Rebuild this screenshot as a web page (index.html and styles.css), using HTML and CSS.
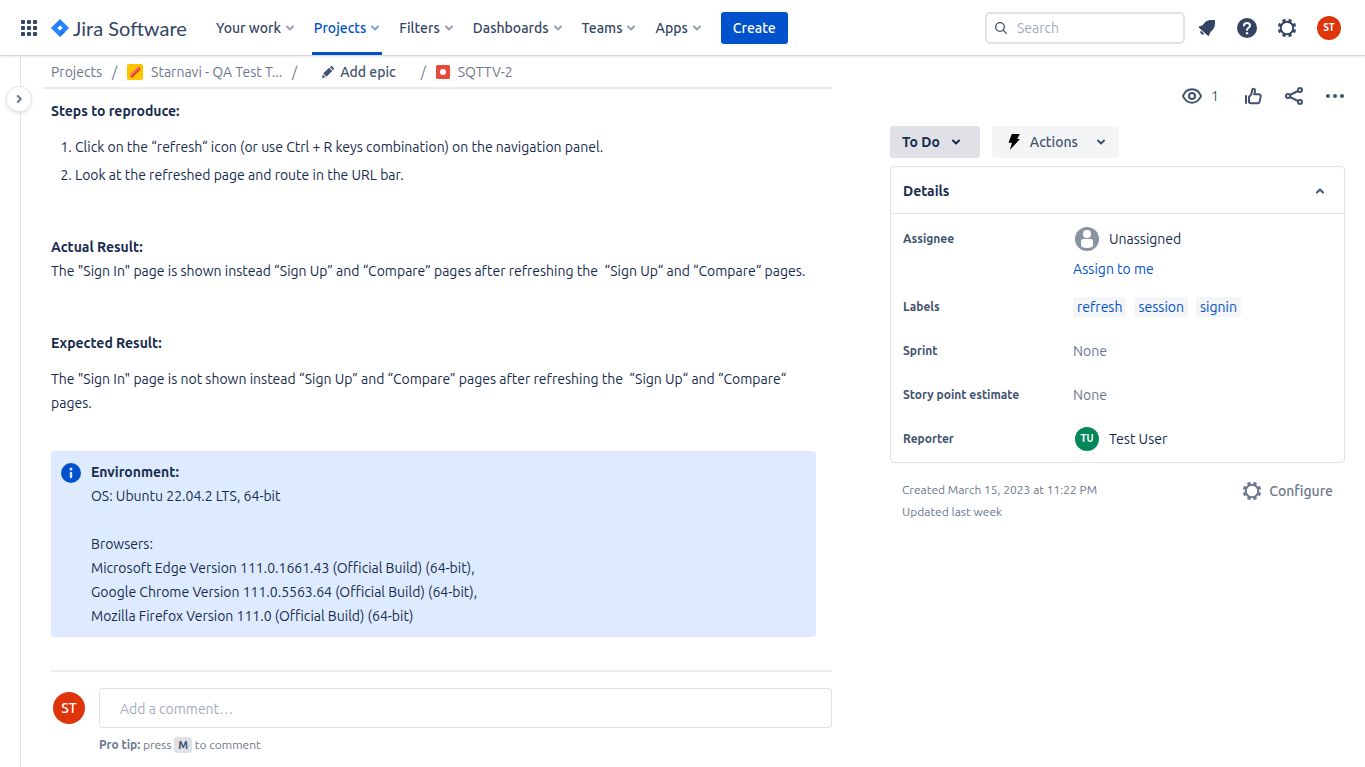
FILE: index.html
```html
<!DOCTYPE html>
<html lang="en">
<head>
<meta charset="utf-8">
<meta name="viewport" content="width=device-width, initial-scale=1">
<title>SQTTV-2 - Jira Software</title>
<link rel="stylesheet" href="styles.css">
</head>
<body>
<svg class="sprite" aria-hidden="true">
  <symbol id="chevron" viewBox="0 0 10 10"><path d="M2 3.5 5 6.5 8 3.5" fill="none" stroke="currentColor" stroke-width="2" stroke-linecap="round" stroke-linejoin="round"/></symbol>
  <symbol id="gear" viewBox="0 0 20 20">
    <g fill="none" stroke="currentColor">
      <circle cx="10" cy="10" r="6.300" stroke-width="2"/>
      <circle cx="10" cy="10" r="7.900" stroke-width="2.800" pathLength="80" stroke-dasharray="5 5" stroke-dashoffset="-2.500"/>
    </g>
  </symbol>
</svg>
<header class="topbar">
  <button class="plain switcher" aria-label="Switch to">
    <svg width="16" height="16" viewBox="0 0 16 16" fill="currentColor"><rect width="4" height="4" rx="1"/><rect x="6" width="4" height="4" rx="1"/><rect x="12" width="4" height="4" rx="1"/><rect y="6" width="4" height="4" rx="1"/><rect x="6" y="6" width="4" height="4" rx="1"/><rect x="12" y="6" width="4" height="4" rx="1"/><rect y="12" width="4" height="4" rx="1"/><rect x="6" y="12" width="4" height="4" rx="1"/><rect x="12" y="12" width="4" height="4" rx="1"/></svg>
  </button>
  <a class="brand" href="#">
    <svg width="18" height="18" viewBox="0 0 18 18">
      <defs>
        <linearGradient id="fold-a" x1="9" y1="3" x2="5" y2="7" gradientUnits="userSpaceOnUse"><stop offset="0" stop-color="#0f62dc"/><stop offset="1" stop-color="#2684ff"/></linearGradient>
        <linearGradient id="fold-b" x1="9" y1="15" x2="13" y2="11" gradientUnits="userSpaceOnUse"><stop offset="0" stop-color="#0f62dc"/><stop offset="1" stop-color="#2684ff"/></linearGradient>
      </defs>
      <path d="M9 0 17.600 8.500a.7.7 0 0 1 0 1L9 18 .4 9.500a.7.7 0 0 1 0-1ZM9 6.300 6.300 9 9 11.700 11.700 9Z" fill="#2684ff" fill-rule="evenodd"/>
      <path d="M9 6.300A4.400 4.400 0 0 1 9 2.500L5.200 6.300 7.200 8.100Z" fill="url(#fold-a)"/>
      <path d="M9 11.700A4.400 4.400 0 0 1 9 18L14.400 12.600 11.300 9.400Z" fill="url(#fold-b)"/>
    </svg>
    <span>Jira Software</span>
  </a>
  <nav class="menu" aria-label="Primary">
    <button>Your work<svg><use href="#chevron"/></svg></button>
    <button class="current">Projects<svg><use href="#chevron"/></svg></button>
    <button>Filters<svg><use href="#chevron"/></svg></button>
    <button>Dashboards<svg><use href="#chevron"/></svg></button>
    <button>Teams<svg><use href="#chevron"/></svg></button>
    <button>Apps<svg><use href="#chevron"/></svg></button>
  </nav>
  <button class="create">Create</button>
  <div class="tools">
    <label class="search">
      <svg width="12" height="12" viewBox="0 0 12 12" fill="none" stroke="#42526e" stroke-width="1.300"><circle cx="5" cy="5" r="4.300"/><path d="m8.200 8.200 3.200 3.200" stroke-linecap="round"/></svg>
      <input type="search" placeholder="Search" aria-label="Search">
    </label>
    <button class="plain" aria-label="Notifications"><svg width="20" height="20" viewBox="0 0 20 20" fill="currentColor"><path d="M2 9.800C1.500 9.200 1.800 8.500 2.600 8.200L5.600 7.200 8 4.200C10 2.100 13 1.800 17 2c.7 0 1 .4 1 1 .2 3.800-.2 6.500-2.200 8.700l-2.500 2.600-1.100 3c-.3.800-1 .9-1.600.3Z"/><path d="M3.800 12.600a2.500 2.500 0 0 0 3.500 3.500Z"/></svg></button>
    <button class="plain" aria-label="Help"><svg width="20" height="20" viewBox="0 0 20 20"><circle cx="10" cy="10" r="10" fill="currentColor"/><path d="M7 7.600C7 5.800 8.300 4.900 10 4.900s3 1 3 2.600c0 2.200-3 2.200-3 4.500" fill="none" stroke="#fff" stroke-width="2" stroke-linecap="round"/><circle cx="10" cy="15.200" r="1.200" fill="#fff"/></svg></button>
    <button class="plain" aria-label="Settings"><svg width="20" height="20"><use href="#gear"/></svg></button>
    <button class="avatar red account" aria-label="Your profile">ST</button>
  </div>
</header>
<div class="page">
  <aside class="rail">
    <button class="expand" aria-label="Expand sidebar"><svg width="12" height="12" viewBox="0 0 12 12" fill="none" stroke="#6b778c" stroke-width="2" stroke-linecap="round" stroke-linejoin="round"><path d="M4.800 3 7.800 6l-3 3"/></svg></button>
  </aside>
  <main class="issue">
    <nav class="crumbs" aria-label="Breadcrumbs">
      <a href="#">Projects</a>
      <span class="slash">/</span>
      <a href="#"><svg width="16" height="16" viewBox="0 0 16 16"><rect width="16" height="16" rx="2" fill="#ffc400"/><path d="M4.800 11.400 11.400 4.800" stroke="#de350b" stroke-width="4" stroke-linecap="round"/><path d="M4.300 11 11 4.300" stroke="#ff8f73" stroke-width="2.500" stroke-linecap="round"/><path d="m4.500 11.500 1.200-.4.300-1.600 1.600-.3.300-1.600 1.600-.3.300-1.600 1.600-.4" fill="none" stroke="#de350b" stroke-width=".8"/></svg>Starnavi - QA Test T...</a>
      <span class="slash">/</span>
      <button class="epic"><svg width="12" height="12" viewBox="0 0 12 12" fill="currentColor"><path d="m7 1.800 3.200 3.200L4.400 10.800 1.200 7.600ZM7.800 1l.8-.6c.6-.5 1.200-.4 1.700.1l1.200 1.200c.5.500.6 1.100.1 1.700l-.6.800ZM.7 8.500l2.800 2.800-2.900.7c-.4.100-.7-.2-.6-.6Z"/></svg>Add epic</button>
      <span class="slash">/</span>
      <a href="#"><svg width="14" height="14" viewBox="0 0 14 14"><rect width="14" height="14" rx="1.500" fill="#e5493a"/><circle cx="7" cy="7" r="3" fill="#fff"/></svg>SQTTV-2</a>
    </nav>
    <div class="body">
      <article class="description">
        <p><strong>Steps to reproduce:</strong></p>
        <ol>
          <li>Click on the “refresh“ icon (or use Ctrl + R keys combination) on the navigation panel.</li>
          <li>Look at the refreshed page and route in the URL bar.</li>
        </ol>
        <section>
          <p><strong>Actual Result:</strong><br>The "Sign In" page is shown instead “Sign Up” and “Compare” pages after refreshing the &nbsp;“Sign Up“ and “Compare“ pages.</p>
        </section>
        <section>
          <p><strong>Expected Result:</strong></p>
          <p>The "Sign In" page is not shown instead “Sign Up” and “Compare” pages after refreshing the &nbsp;“Sign Up“ and “Compare“ pages.</p>
        </section>
        <div class="panel">
          <svg width="20" height="20" viewBox="0 0 20 20"><circle cx="10" cy="10" r="10" fill="#0052cc"/><circle cx="10" cy="6" r="1.500" fill="#deebff"/><rect x="8.800" y="8.800" width="2.400" height="6.400" rx="1.200" fill="#deebff"/></svg>
          <p><strong>Environment:</strong><br>OS: Ubuntu 22.04.2 LTS, 64-bit<br><br>Browsers:<br>Microsoft Edge Version 111.0.1661.43 (Official Build) (64-bit),<br>Google Chrome Version 111.0.5563.64 (Official Build) (64-bit),<br>Mozilla Firefox Version 111.0 (Official Build) (64-bit)</p>
        </div>
      </article>
      <form class="comment">
        <span class="avatar red large">ST</span>
        <div class="comment-field">
          <input type="text" placeholder="Add a comment…" aria-label="Add a comment">
          <p class="tip"><strong>Pro tip:</strong> press <kbd>M</kbd> to comment</p>
        </div>
      </form>
    </div>
  </main>
  <aside class="side">
    <div class="actions">
      <button class="plain watch"><svg width="20" height="16" viewBox="0 0 20 16" fill="none" stroke="currentColor" stroke-width="2"><path d="M1 8C2.600 4 6 1.300 10 1.300S17.400 4 19 8c-1.600 4-5 6.700-9 6.700S2.600 12 1 8Z"/><circle cx="10" cy="8" r="3"/></svg>1</button>
      <button class="plain" aria-label="Vote"><svg width="18" height="18" viewBox="0 0 18 18" fill="none" stroke="currentColor" stroke-width="2" stroke-linejoin="round"><path d="M2 9v7" stroke-linecap="round"/><path d="M5 14.500V10C7.300 8 8 6 8.200 3.200 8.400 1 11 1.200 11 3.500c0 1.600-.3 2.700-.8 3.800h4.600c1.400 0 2.200 1 1.900 2.300l-1 4.800c-.3 1.300-1 1.900-2.200 1.900H7Q5 16.300 5 14.500Z"/></svg></button>
      <button class="plain" aria-label="Share"><svg width="18" height="18" viewBox="0 0 18 18" fill="none" stroke="currentColor" stroke-width="2"><circle cx="3" cy="9" r="2"/><circle cx="15" cy="3" r="2"/><circle cx="15" cy="15" r="2"/><path d="m5 8 8-4M5 10l8 4"/></svg></button>
      <button class="plain" aria-label="More"><svg width="18" height="4" viewBox="0 0 18 4" fill="currentColor"><circle cx="2" cy="2" r="2"/><circle cx="9" cy="2" r="2"/><circle cx="16" cy="2" r="2"/></svg></button>
    </div>
    <div class="status">
      <button class="todo">To Do<svg><use href="#chevron"/></svg></button>
      <button class="automation"><svg class="bolt" viewBox="0 0 12 16"><path d="M3.800 0h8L9.200 5H12L1.800 16 4 8.800H.5Z" fill="#000"/></svg>Actions<svg><use href="#chevron"/></svg></button>
    </div>
    <section class="details">
      <button class="details-head" aria-expanded="true">Details<svg><use href="#chevron"/></svg></button>
      <dl>
        <dt>Assignee</dt>
        <dd class="assignee"><span class="person"><svg width="24" height="24" viewBox="0 0 24 24"><circle cx="12" cy="12" r="12" fill="#8993a4"/><circle cx="12" cy="7" r="4" fill="#fff"/><path d="M6 14.500Q6 12 8.500 12h7Q18 12 18 14.500V18q0 3-6 3t-6-3Z" fill="#fff"/></svg>Unassigned</span><a href="#">Assign to me</a></dd>
        <dt>Labels</dt>
        <dd class="tags"><a href="#">refresh</a><a href="#">session</a><a href="#">signin</a></dd>
        <dt>Sprint</dt>
        <dd class="none">None</dd>
        <dt>Story point estimate</dt>
        <dd class="none">None</dd>
        <dt>Reporter</dt>
        <dd><span class="person"><span class="avatar green">TU</span>Test User</span></dd>
      </dl>
    </section>
    <footer class="meta">
      <p>Created March 15, 2023 at 11:22 PM<br>Updated last week</p>
      <button class="plain configure"><svg width="20" height="20"><use href="#gear"/></svg>Configure</button>
    </footer>
  </aside>
</div>
</body>
</html>
```
FILE: styles.css
```css
* { box-sizing: border-box; }
body {
  margin: 0;
  min-height: 100vh;
  display: flex;
  flex-direction: column;
  color: #172b4d;
  background: #fff;
  font: 14px/24px Ubuntu, "Noto Sans", sans-serif;
}
p, ol, dl, dd { margin: 0; }
a { color: #0052cc; text-decoration: none; }
button, input { font: inherit; color: inherit; }
button {
  display: flex;
  align-items: center;
  border: 0;
  padding: 0;
  background: none;
  cursor: pointer;
  white-space: nowrap;
}
svg { flex: none; }
.sprite { position: absolute; width: 0; height: 0; }

.topbar {
  position: relative;
  display: flex;
  align-items: center;
  height: 55px;
  padding: 0 24px 0 21px;
  box-shadow: 0 1px 1px #d5d8de, 0 2px 3px #eceef1;
  color: #344563;
}
.brand {
  display: flex;
  align-items: center;
  gap: 4px;
  width: 135px;
  margin-left: 14px;
  color: #344563;
  font: 20px/24px Lato, "Noto Sans", sans-serif;
  white-space: nowrap;
}
.menu {
  display: flex;
  align-self: stretch;
  gap: 15px;
  margin-left: 28px;
}
.menu button { padding: 0 2px; font-weight: 500; }
.menu svg { width: 10px; height: 10px; margin-left: 4px; color: #97a0af; }
.menu .current { color: #0052cc; box-shadow: inset 0 -3px #0052cc; }
.menu .current svg { color: #7aa5e3; }
.create {
  height: 32px;
  margin-left: 17px;
  padding: 0 12px;
  border-radius: 3px;
  color: #fff;
  background: #0052cc;
  font-weight: 500;
}
.tools { display: flex; align-items: center; gap: 20px; margin-left: auto; }
.search {
  display: flex;
  align-items: center;
  gap: 10px;
  width: 200px;
  height: 32px;
  margin-right: -8px;
  padding: 0 8px;
  border: 2px solid #dfe1e6;
  border-radius: 5px;
}
.search input { width: 100%; min-width: 0; padding: 0; border: 0; outline: 0; background: none; }
::placeholder { color: #a5adba; opacity: 1; }
.avatar {
  display: flex;
  align-items: center;
  justify-content: center;
  flex: none;
  width: 24px;
  height: 24px;
  border-radius: 50%;
  color: #fff;
  font-size: 10px;
  font-weight: 600;
}
.red { background: #de350b; }
.green { background: #00875a; }
.large { width: 32px; height: 32px; margin: 4px 2px; font-size: 14px; font-weight: 500; }

.page {
  flex: 1;
  display: grid;
  grid-template-columns: 21px minmax(0, 1fr) minmax(320px, 455px);
  padding-right: 20px;
}
.rail { position: relative; border-right: 1px solid #dfe1e6; }
.expand {
  position: absolute;
  top: 32px;
  left: 7px;
  justify-content: center;
  width: 24px;
  height: 24px;
  border-radius: 50%;
  background: #fff;
  box-shadow: 0 0 0 1px #e4e6ea, 0 2px 4px #d5d8de;
}
.issue { padding: 1px 58px 0 22px; }
.crumbs {
  display: flex;
  align-items: center;
  height: 33px;
  padding-left: 8px;
  border-bottom: 2px solid #ebecf0;
  color: #6b778c;
  white-space: nowrap;
}
.crumbs a { display: flex; align-items: center; gap: 8px; color: #6b778c; }
.slash { width: 25px; text-align: center; }
.epic { gap: 6px; padding: 0 15px; color: #42526e; font-weight: 500; }
.body { padding-left: 8px; }
.description { padding: 10px 16px 33px 0; border-bottom: 2px solid #ebecf0; }
.description strong { font-weight: 700; }
.description ol { margin-top: 12px; padding-left: 24px; }
.description li + li { margin-top: 4px; }
.description section { margin-top: 48px; }
.description section p + p { margin-top: 12px; }
.panel {
  display: flex;
  gap: 10px;
  margin-top: 36px;
  padding: 9px 10px;
  border-radius: 3px;
  background: #deebff;
}
.panel svg { margin-top: 3px; }
.comment { display: flex; gap: 12px; padding-top: 16px; }
.comment-field { flex: 1; }
.comment input {
  display: block;
  width: 100%;
  height: 40px;
  padding: 2px 20px 0;
  border: 1px solid #dfe1e6;
  border-radius: 3px;
}
.tip { margin-top: 5px; color: #6b778c; font-size: 12px; }
.tip strong { font-weight: 700; }
kbd {
  display: inline-block;
  padding: 0 4px;
  border-radius: 3px;
  background: #dfe1e6;
  color: #42526e;
  font: bold 11px/16px Ubuntu, "Noto Sans", sans-serif;
}

.plain { color: #344563; }
.actions { display: flex; justify-content: flex-end; align-items: center; gap: 23px; height: 32px; margin-top: 25px; padding-right: 1px; }
.actions .plain { color: #42526e; }
.actions .watch { gap: 9px; margin-right: 2px; }
.status { display: flex; gap: 12px; margin-top: 14px; }
.status button { height: 32px; padding: 0 12px; border-radius: 3px; }
.status svg { width: 10px; height: 10px; margin-left: 11px; }
.status .todo { padding-right: 19px; background: #dfe1e6; font-weight: 700; }
.status .automation { background: #f4f5f7; color: #42526e; font-weight: 500; }
.status .automation svg { margin: 0 1px 0 18px; }
.status .automation .bolt { width: 12px; height: 16px; margin: 0 10px 0 4px; }
.details { margin-top: 8px; border: 1px solid #dfe1e6; border-radius: 4px; }
.details-head {
  justify-content: space-between;
  width: 100%;
  height: 47px;
  padding: 1px 19px 0 12px;
  border-bottom: 1px solid #dfe1e6;
  font-weight: 700;
}
.details-head svg { width: 10px; height: 10px; color: #42526e; transform: rotate(180deg); }
dl {
  display: grid;
  grid-template-columns: 170px 1fr;
  row-gap: 20px;
  padding: 13px 12px 11px;
}
dt { color: #42526e; font-size: 12px; font-weight: 600; }
.assignee { display: grid; row-gap: 6px; margin-bottom: -6px; }
.person { display: flex; align-items: center; gap: 10px; padding-left: 2px; }
.tags { display: flex; align-items: center; gap: 8px; }
.tags a { padding: 0 4px; border-radius: 3px; background: #f4f5f7; line-height: 20px; }
.none { color: #6b778c; }
.meta { display: flex; justify-content: space-between; align-items: flex-start; padding: 16px 12px 0; color: #6b778c; }
.meta p { font-size: 12px; line-height: 22px; }
.configure { gap: 7px; color: #6b778c; font-weight: 500; }
```
